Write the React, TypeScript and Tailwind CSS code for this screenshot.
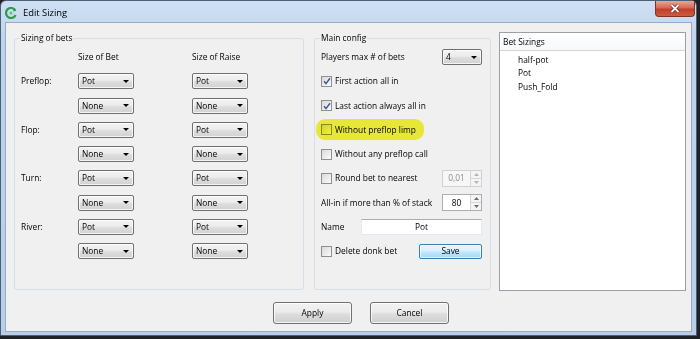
import React from 'react';

const Combo = ({ value, w }: { value: string; w: string }) => (
  <div
    className={`${w} h-[16px] flex items-center justify-between pl-[3px] pr-[4px] border border-[#707070] rounded-[2px] bg-[linear-gradient(#f3f3f3,#ececec_45%,#dddddd_55%,#d2d2d2)] shadow-[inset_0_0_0_1px_rgba(255,255,255,0.75)]`}
  >
    <span>{value}</span>
    <svg width="6" height="3" viewBox="0 0 6 3">
      <path d="M0 0h6L3 3z" fill="#000" />
    </svg>
  </div>
);

const Check = ({ checked }: { checked?: boolean }) => (
  <span className="w-[11px] h-[11px] border border-[#8e8f8f] bg-[linear-gradient(135deg,#d9d9d9,#fbfbfb)] flex items-center justify-center shrink-0">
    {checked && (
      <svg width="8" height="8" viewBox="0 0 8 8">
        <path d="M1 4.3 L3 6.6 L7 1.2" stroke="#41599a" strokeWidth="1.5" fill="none" />
      </svg>
    )}
  </span>
);

const Spin = ({ value, disabled }: { value: string; disabled?: boolean }) => (
  <div
    className={
      disabled
        ? 'w-[40px] h-[17px] flex border border-[#cfd1d4] bg-[#f7f7f7] text-[#8c8c8c]'
        : 'w-[40px] h-[17px] flex border border-[#abadb3] bg-white text-black'
    }
  >
    <span className="flex-1 flex items-center justify-center">{value}</span>
    <div className="w-[11px] flex flex-col border-l border-[#d6d6d6]">
      <div className="flex-1 flex items-center justify-center border-b border-[#d6d6d6] bg-[#f4f4f4]">
        <svg width="5" height="3" viewBox="0 0 5 3">
          <path d="M0 3h5L2.5 0z" fill={disabled ? '#b5b5b5' : '#6b6b6b'} />
        </svg>
      </div>
      <div className="flex-1 flex items-center justify-center bg-[#f4f4f4]">
        <svg width="5" height="3" viewBox="0 0 5 3">
          <path d="M0 0h5L2.5 3z" fill={disabled ? '#b5b5b5' : '#6b6b6b'} />
        </svg>
      </div>
    </div>
  </div>
);

const streets = ['Preflop:', 'Flop:', 'Turn:', 'River:'];

export default function App() {
  return (
    <div className="w-[700px] h-[339px] bg-[#1f2328] font-['Open_Sans','Noto_Sans',sans-serif] text-[8.4px] leading-[12px] text-black">
      <div className="w-[697px] h-[336px] flex flex-col border border-[#4d5f74] rounded-t-[6px] bg-[linear-gradient(#cfe0f4,#bed4ec_12%,#b9cfe9)]">
        {/* title bar */}
        <div className="h-[21px] flex items-start pl-[4px] shrink-0">
          <svg className="mt-[6px]" width="12" height="12" viewBox="0 0 12 12">
            <path d="M10.2 3.2 A5 5 0 1 0 10.6 8" stroke="#2f9a4a" strokeWidth="2.2" fill="none" />
            <path d="M8.6 1.2 L11.4 3.8 L8.2 4.4z" fill="#2f9a4a" />
            <circle cx="6" cy="6" r="1.6" fill="#6cc07d" />
          </svg>
          <span className="mt-[6px] ml-[6px] text-[9.4px] leading-[12px]">Edit Sizing</span>
          <div className="ml-auto mr-[1px] w-[40px] h-[16px] flex items-center justify-center border border-t-0 border-[#7e3427] rounded-b-[4px] bg-[linear-gradient(#e7a795,#d46a54_45%,#c0402a_55%,#cf5a40)]">
            <svg width="10" height="9" viewBox="0 0 10 9">
              <path d="M1.5 1 L8.5 8 M8.5 1 L1.5 8" stroke="#5c2319" strokeWidth="3.2" />
              <path d="M1.5 1 L8.5 8 M8.5 1 L1.5 8" stroke="#fff" strokeWidth="1.8" />
            </svg>
          </div>
        </div>

        {/* client area */}
        <div className="flex-1 mx-[4px] mb-[3px] border border-[#98abc0] bg-[#f0f0f0] pt-[9px] pl-[8px] flex flex-col">
          <div className="flex items-start">
            {/* Sizing of bets */}
            <fieldset className="w-[290px] h-[258px] border border-[#d5dfe5] rounded-[3px]">
              <legend className="ml-[5px] px-[1px] leading-[12px]">Sizing of bets</legend>
              <div className="flex flex-col gap-[8.25px] pt-[5px] pl-[6px]">
                <div className="h-[16px] flex items-center">
                  <span className="w-[57px]" />
                  <span className="w-[56px]">Size of Bet</span>
                  <span className="ml-[58px]">Size of Raise</span>
                </div>
                {streets.map((s) => (
                  <React.Fragment key={s}>
                    <div className="h-[16px] flex items-center">
                      <span className="w-[57px]">{s}</span>
                      <Combo value="Pot" w="w-[56px]" />
                      <div className="ml-[58px]">
                        <Combo value="Pot" w="w-[56px]" />
                      </div>
                    </div>
                    <div className="h-[16px] flex items-center">
                      <span className="w-[57px]" />
                      <Combo value="None" w="w-[56px]" />
                      <div className="ml-[58px]">
                        <Combo value="None" w="w-[56px]" />
                      </div>
                    </div>
                  </React.Fragment>
                ))}
              </div>
            </fieldset>

            {/* Main config */}
            <fieldset className="ml-[10px] w-[177px] h-[258px] border border-[#d5dfe5] rounded-[3px]">
              <legend className="ml-[5px] px-[1px] leading-[12px]">Main config</legend>
              <div className="flex flex-col gap-[8.25px] pt-[5px] pl-[6px] pr-[8px]">
                <div className="h-[16px] flex items-center justify-between">
                  <span>Players max # of bets</span>
                  <Combo value="4" w="w-[40px]" />
                </div>
                <div className="h-[16px] flex items-center gap-[3px]">
                  <Check checked />
                  <span>First action all in</span>
                </div>
                <div className="h-[16px] flex items-center gap-[3px]">
                  <Check checked />
                  <span>Last action always all in</span>
                </div>
                <div className="relative h-[16px] flex items-center gap-[3px]">
                  <Check />
                  <span>Without preflop limp</span>
                  <span className="absolute -left-[5px] -top-[3px] w-[108px] h-[21px] rounded-[9px] bg-[#f6f63a] mix-blend-multiply" />
                </div>
                <div className="h-[16px] flex items-center gap-[3px]">
                  <Check />
                  <span>Without any preflop call</span>
                </div>
                <div className="h-[16px] flex items-center justify-between">
                  <div className="flex items-center gap-[3px]">
                    <Check />
                    <span>Round bet to nearest</span>
                  </div>
                  <Spin value="0,01" disabled />
                </div>
                <div className="h-[16px] flex items-center justify-between">
                  <span>All-in if more than % of stack</span>
                  <Spin value="80" />
                </div>
                <div className="h-[16px] flex items-center justify-between">
                  <span>Name</span>
                  <div className="w-[121px] h-[16px] flex items-center justify-center bg-white border border-[#e3e9ef] border-t-[#abadb3]">
                    Pot
                  </div>
                </div>
                <div className="h-[16px] flex items-center justify-between">
                  <div className="flex items-center gap-[3px]">
                    <Check />
                    <span>Delete donk bet</span>
                  </div>
                  <div className="w-[63px] h-[15px] flex items-center justify-center border border-[#3c7fb1] rounded-[2px] bg-[linear-gradient(#eaf6fd,#d9f0fc_45%,#bee6fd_55%,#a7d9f5)] shadow-[inset_0_0_0_1px_rgba(255,255,255,0.6)]">
                    Save
                  </div>
                </div>
              </div>
            </fieldset>

            {/* Bet Sizings list */}
            <div className="ml-[8px] w-[187px] h-[259px] border border-[#9a9fa8] bg-white flex flex-col">
              <div className="h-[18px] flex items-center pl-[3px] border-b border-[#d5d5d5] bg-[linear-gradient(#ffffff,#f7f8fa)]">
                Bet Sizings
              </div>
              <div className="pt-[1.5px] pl-[18px] flex flex-col leading-[13.6px]">
                <span>half-pot</span>
                <span>Pot</span>
                <span>Push_Fold</span>
              </div>
            </div>
          </div>

          {/* buttons */}
          <div className="mt-[10.5px] ml-[259px] flex gap-[18px]">
            <div className="w-[79px] h-[22px] flex items-center justify-center border border-[#707070] rounded-[3px] bg-[linear-gradient(#f2f2f2,#ebebeb_45%,#dddddd_55%,#cfcfcf)] shadow-[inset_0_0_0_1px_rgba(255,255,255,0.8)]">
              Apply
            </div>
            <div className="w-[79px] h-[22px] flex items-center justify-center border border-[#707070] rounded-[3px] bg-[linear-gradient(#f2f2f2,#ebebeb_45%,#dddddd_55%,#cfcfcf)] shadow-[inset_0_0_0_1px_rgba(255,255,255,0.8)]">
              Cancel
            </div>
          </div>
        </div>
      </div>
    </div>
  );
}
